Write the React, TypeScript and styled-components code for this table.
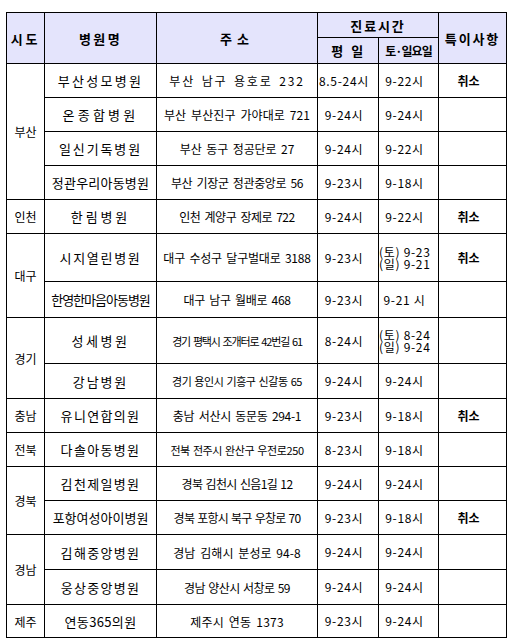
import styled, { createGlobalStyle } from "styled-components"

const GlobalStyle = createGlobalStyle`
    body{
        margin: 0;
        background: #fff;
        font-family: "Noto Sans CJK KR", "Noto Sans", sans-serif;
        color: #000;
    }
`

const Page = styled.div`
    padding: 12px 0 0 6px;
`

const Table = styled.table`
    width: 500px;
    border-collapse: collapse;
    table-layout: fixed;
    border: 1px solid #000;

    td, th{
        border: 1px solid #000;
        padding: 0;
        text-align: center;
        vertical-align: middle;
        overflow: hidden;
        white-space: nowrap;
    }
`

const Col = styled.col<{ $w: number }>`
    width: ${p => p.$w}px;
`

const Head = styled.th<{ $ls?: number; $size?: number }>`
    background: #e4e4fc;
    font-size: ${p => p.$size ?? 13}px;
    font-weight: 700;
    letter-spacing: ${p => p.$ls ?? 0}px;
    word-spacing: 2px;
`

const Row = styled.tr<{ $h: number }>`
    height: ${p => p.$h}px;
`

const Region = styled.td`
    font-size: 12px;
`

const Name = styled.td<{ $ls: number }>`
    font-size: 13px;
    letter-spacing: ${p => p.$ls}px;
`

const Addr = styled.td<{ $ls: number; $size?: number; $ws?: number }>`
    font-size: ${p => p.$size ?? 12}px;
    letter-spacing: ${p => p.$ls}px;
    word-spacing: ${p => p.$ws ?? 2}px;
`

const Time = styled.td<{ $pr: number }>`
    font-size: 12px;
    letter-spacing: 0.7px;
    line-height: 12px;
    white-space: pre !important;
    padding-right: ${p => p.$pr}px !important;
`

const Note = styled.td`
    font-size: 12px;
    font-weight: 700;
    padding-right: 8px !important;
`

type Hospital = {
    region?: string
    span?: number
    name: string
    nls: number
    addr: string
    als: number
    asize?: number
    aws?: number
    weekday: string
    weekend: string
    note?: string
    h: number
}

const rows: Hospital[] = [
    { region: "부산", span: 4, name: "부산성모병원", nls: 2.3, addr: "부산 남구 용호로 232", als: 1.85, weekday: "8.5-24시", weekend: "9-22시", note: "취소", h: 34 },
    { name: "온종합병원", nls: 3.2, addr: "부산 부산진구 가야대로 721", als: 0.1, weekday: "9-24시", weekend: "9-24시", h: 34 },
    { name: "일신기독병원", nls: 1.9, addr: "부산 동구 정공단로 27", als: -0.1, weekday: "9-24시", weekend: "9-22시", h: 34 },
    { name: "정관우리아동병원", nls: 0.2, addr: "부산 기장군 정관중앙로 56", als: -0.38, weekday: "9-23시", weekend: "9-18시", h: 34 },
    { region: "인천", span: 1, name: "한림병원", nls: 2.9, addr: "인천 계양구 장제로 722", als: -0.5, weekday: "9-24시", weekend: "9-22시", note: "취소", h: 34 },
    { region: "대구", span: 2, name: "시지열린병원", nls: 1.7, addr: "대구 수성구 달구벌대로 3188", als: -0.22, weekday: "9-23시", weekend: "(토) 9-23\n(일) 9-21", note: "취소", h: 48 },
    { name: "한영한마음아동병원", nls: -1, addr: "대구 남구 월배로 468", als: -0.32, weekday: "9-23시", weekend: "9-21 시", h: 36 },
    { region: "경기", span: 2, name: "성세병원", nls: 2.5, addr: "경기 평택시 조개터로 42번길 61", als: -1.15, asize: 11, aws: 1.5, weekday: "8-24시", weekend: "(토) 8-24\n(일) 9-24", h: 46 },
    { name: "강남병원", nls: 1.9, addr: "경기 용인시 기흥구 신갈동 65", als: -0.43, asize: 11, aws: 1, weekday: "9-24시", weekend: "9-24시", h: 35 },
    { region: "충남", span: 1, name: "유니연합의원", nls: 1.34, addr: "충남 서산시 동문동 294-1", als: -0.3, weekday: "9-23시", weekend: "9-18시", note: "취소", h: 34 },
    { region: "전북", span: 1, name: "다솔아동병원", nls: 1.34, addr: "전북 전주시 완산구 우전로250", als: -0.4, asize: 11, aws: 1, weekday: "8-23시", weekend: "9-18시", h: 34 },
    { region: "경북", span: 2, name: "김천제일병원", nls: 1.34, addr: "경북 김천시 신음1길 12", als: -0.6, aws: 1, weekday: "9-24시", weekend: "9-24시", h: 34 },
    { name: "포항여성아이병원", nls: 0, addr: "경북 포항시 북구 우창로 70", als: -0.73, aws: 1, weekday: "9-23시", weekend: "9-18시", note: "취소", h: 34 },
    { region: "경남", span: 2, name: "김해중앙병원", nls: 1.34, addr: "경남 김해시 분성로 94-8", als: 0.07, weekday: "9-24시", weekend: "9-24시", h: 35 },
    { name: "웅상중앙병원", nls: 1.28, addr: "경남 양산시 서창로 59", als: -0.52, aws: 1, weekday: "9-24시", weekend: "9-24시", h: 35 },
    { region: "제주", span: 1, name: "연동365의원", nls: 0.35, addr: "제주시 연동 1373", als: 0.23, weekday: "9-23시", weekend: "9-24시", h: 33 },
]

const App = () => {
  return (
    <Page>
        <GlobalStyle />
        <Table>
            <colgroup>
                <Col $w={38} />
                <Col $w={112} />
                <Col $w={161} />
                <Col $w={61} />
                <Col $w={60} />
                <Col $w={68} />
            </colgroup>
            <thead>
                <Row $h={25}>
                    <Head rowSpan={2} $ls={2.7}>시도</Head>
                    <Head rowSpan={2} $ls={2.3}>병원명</Head>
                    <Head rowSpan={2} $ls={5}>주소</Head>
                    <Head colSpan={2} $ls={1.9}>진료시간</Head>
                    <Head rowSpan={2} $ls={1.9}>특이사항</Head>
                </Row>
                <Row $h={26}>
                    <Head $ls={1.5}>평 일</Head>
                    <Head $size={12} $ls={-0.9}>토·일요일</Head>
                </Row>
            </thead>
            <tbody>
                {rows.map((r) => (
                    <Row $h={r.h} key={r.name}>
                        {r.region && <Region rowSpan={r.span}>{r.region}</Region>}
                        <Name $ls={r.nls}>{r.name}</Name>
                        <Addr $ls={r.als} $size={r.asize} $ws={r.aws}>{r.addr}</Addr>
                        <Time $pr={8}>{r.weekday}</Time>
                        <Time $pr={8}>{r.weekend}</Time>
                        <Note>{r.note ?? ""}</Note>
                    </Row>
                ))}
            </tbody>
        </Table>
    </Page>
  )
}

export default App
